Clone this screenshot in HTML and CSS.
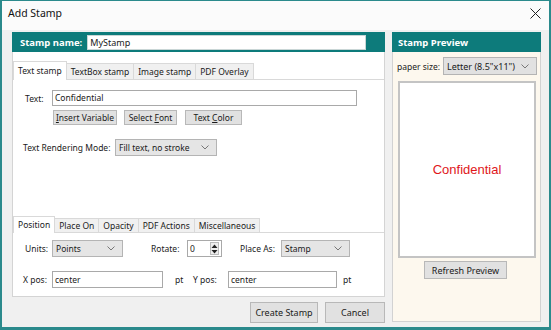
FILE: index.html
```html
<!DOCTYPE html>
<html>
<head>
<meta charset="utf-8">
<link rel="stylesheet" href="styles.css">
</head>
<body>
<div class="window">
  <div class="titlebar">
    <span class="title">Add Stamp</span>
    <svg class="close" width="11" height="11" viewBox="0 0 11 11"><path d="M0.5 0.5L10.5 10.5M10.5 0.5L0.5 10.5" stroke="#222" stroke-width="1" fill="none"/></svg>
  </div>
  <div class="body">
    <div class="left">
      <div class="header">
        <span class="hlabel">Stamp name:</span>
        <div class="namefield">MyStamp</div>
      </div>
      <div class="panel">
        <div class="tabs upper">
          <div class="tab active">Text stamp</div>
          <div class="tab">TextBox stamp</div>
          <div class="tab">Image stamp</div>
          <div class="tab">PDF Overlay</div>
        </div>
        <div class="page upper-page">
          <div class="row text-row">
            <span class="lbl l-text">Text:</span>
            <div class="field text-field">Confidential</div>
          </div>
          <div class="row btn-row">
            <div class="btn b-var"><span><u>I</u>nsert Variable</span></div>
            <div class="btn b-font"><span>Select <u>F</u>ont</span></div>
            <div class="btn b-color"><span>Text <u>C</u>olor</span></div>
          </div>
          <div class="row mode-row">
            <span class="lbl l-mode">Text Rendering Mode:</span>
            <div class="select mode-select"><span>Fill text, no stroke</span><svg width="8" height="5" viewBox="0 0 8 5"><path d="M0.5 0.5L4 4L7.5 0.5" stroke="#777" fill="none"/></svg></div>
          </div>
        </div>
        <div class="tabs lower">
          <div class="tab active">Position</div>
          <div class="tab">Place On</div>
          <div class="tab">Opacity</div>
          <div class="tab">PDF Actions</div>
          <div class="tab">Miscellaneous</div>
        </div>
        <div class="page lower-page">
          <div class="row pos-row1">
            <span class="lbl l-units">Units:</span>
            <div class="select units-select"><span>Points</span><svg width="8" height="5" viewBox="0 0 8 5"><path d="M0.5 0.5L4 4L7.5 0.5" stroke="#777" fill="none"/></svg></div>
            <span class="lbl l-rotate">Rotate:</span>
            <div class="field spin"><span>0</span>
              <div class="spinbtn"><svg width="7" height="10" viewBox="0 0 7 10"><path d="M3.5 0.5L6.5 4H0.5Z M0.5 6H6.5L3.5 9.5Z" fill="#222"/></svg></div>
            </div>
            <span class="lbl l-place">Place As:</span>
            <div class="select place-select"><span>Stamp</span><svg width="8" height="5" viewBox="0 0 8 5"><path d="M0.5 0.5L4 4L7.5 0.5" stroke="#777" fill="none"/></svg></div>
          </div>
          <div class="row pos-row2">
            <span class="lbl l-xpos">X pos:</span>
            <div class="field xfield">center</div>
            <span class="lbl l-pt1">pt</span>
            <span class="lbl l-ypos">Y pos:</span>
            <div class="field yfield">center</div>
            <span class="lbl l-pt2">pt</span>
          </div>
        </div>
      </div>
      <div class="footer">
        <div class="btn b-create">Create Stamp</div>
        <div class="btn b-cancel">Cancel</div>
      </div>
    </div>
    <div class="right">
      <div class="header rheader"><span class="hlabel">Stamp Preview</span></div>
      <div class="paper-row">
        <span class="lbl l-paper">paper size:</span>
        <div class="select paper-select"><span>Letter (8.5"x11")</span><svg width="8" height="5" viewBox="0 0 8 5"><path d="M0.5 0.5L4 4L7.5 0.5" stroke="#777" fill="none"/></svg></div>
      </div>
      <div class="preview"><span class="conf">Confidential</span></div>
      <div class="btn b-refresh">Refresh Preview</div>
    </div>
  </div>
</div>
</body>
</html>
```

FILE: styles.css
```css
* { box-sizing: border-box; }
html, body { margin: 0; padding: 0; }
body {
  width: 551px;
  height: 330px;
  overflow: hidden;
  font-family: "Noto Sans", "Open Sans", sans-serif;
  font-size: 8.5px;
  color: #1a1a1a;
  background: #f0f0f0;
}
.window {
  width: 551px;
  height: 330px;
  border-style: solid;
  border-color: #2b8a8c;
  border-width: 1px 2px 3px 2px;
  background: #f0f0f0;
}
.titlebar {
  height: 29px;
  background: #fbfbfb;
  display: flex;
  align-items: center;
  justify-content: space-between;
  padding: 0 8px 6px 6px;
}
.title { font-size: 10.5px; color: #111; }
.close { margin-top: 2px; }
.body {
  display: flex;
  gap: 7px;
  padding: 2px 0 0 10px;
}
.left {
  width: 373px;
  display: flex;
  flex-direction: column;
}
.header {
  height: 20px;
  background: #0d7b7b;
  display: flex;
  align-items: center;
  padding-left: 8px;
}
.hlabel {
  color: #fff;
  font-weight: bold;
  font-size: 9.5px;
}
.namefield {
  margin-left: 5px;
  width: 279px;
  height: 15px;
  background: #fff;
  border: 1px solid #c9d6d6;
  padding-left: 2px;
  line-height: 13px;
  font-size: 9px;
}
.panel {
  height: 245px;
  background: #fff;
  border: 1px solid #d4d4d4;
  border-top: none;
  padding-top: 10px;
}
.tabs {
  display: flex;
  align-items: flex-end;
  height: 18px;
  border-bottom: 1px solid #d9d9d9;
}
.tab {
  height: 16px;
  line-height: 16px;
  padding: 0 4px;
  border: 1px solid #d9d9d9;
  border-bottom: none;
  background: #f0f0f0;
  margin-right: -1px;
  white-space: nowrap;
}
.tab.active {
  height: 19px;
  margin-bottom: -1px;
  background: #fff;
  line-height: 18px;
}
.tabs.lower {
  height: 16px;
  margin-top: 5px;
}
.tabs.lower .tab { height: 14px; line-height: 14px; }
.tabs.lower .tab.active { height: 17px; line-height: 16px; }
.page { display: flow-root; }
.upper-page { height: 132px; }
.lower-page { height: 59px; }
.row {
  display: flex;
  align-items: center;
  white-space: nowrap;
}
.lbl { flex: none; }
.field {
  height: 16px;
  background: #fff;
  border: 1px solid #a9a9a9;
  padding-left: 2px;
  line-height: 14px;
}
.select {
  height: 17px;
  background: #e5e5e5;
  border: 1px solid #b4b4b4;
  display: flex;
  align-items: center;
  justify-content: space-between;
  padding: 0 7px 0 3px;
}
.btn {
  height: 15px;
  background: #e1e1e1;
  border: 1px solid #b8b8b8;
  display: flex;
  align-items: center;
  justify-content: center;
  white-space: nowrap;
}
.text-row { margin-top: 10px; padding-left: 12px; }
.l-text { width: 27px; }
.text-field { width: 305px; }
.btn-row { margin-top: 4px; padding-left: 40px; }
.b-var { width: 64px; }
.b-font { width: 53px; margin-left: 7px; }
.b-color { width: 57px; margin-left: 8px; }
.mode-row { margin-top: 14px; padding-left: 10px; }
.l-mode { width: 92px; }
.mode-select { width: 102px; }
.pos-row1 { margin-top: 7px; padding-left: 12px; }
.l-units { width: 27px; }
.units-select { width: 71px; }
.l-rotate { margin-left: 28px; width: 36px; }
.spin {
  width: 35px;
  height: 17px;
  display: flex;
  align-items: center;
  justify-content: space-between;
  padding-right: 2px;
}
.spinbtn {
  width: 9px;
  height: 13px;
  border: 1px solid #bbb;
  background: #eee;
  display: flex;
  align-items: center;
  justify-content: center;
}
.l-place { margin-left: 18px; width: 41px; }
.place-select { width: 69px; }
.pos-row2 { margin-top: 14px; padding-left: 10px; }
.l-xpos { width: 29px; }
.xfield { width: 111px; height: 17px; line-height: 15px; }
.l-pt1 { margin-left: 12px; width: 18px; }
.l-ypos { width: 35px; }
.yfield { width: 109px; height: 17px; line-height: 15px; }
.l-pt2 { margin-left: 6px; }
.footer {
  display: flex;
  justify-content: flex-end;
  gap: 7px;
  margin-top: 5px;
}
.footer .btn { height: 21px; font-size: 9px; }
.b-create { width: 68px; }
.b-cancel { width: 60px; }
.right {
  width: 149px;
  height: 290px;
  background: #fdf8ee;
  border: 1px solid #d2d2d2;
  border-top: none;
  display: flex;
  flex-direction: column;
}
.rheader { padding-left: 6px; margin: 0 -1px; }
.paper-row {
  display: flex;
  align-items: center;
  margin-top: 5px;
  padding-left: 4px;
  white-space: nowrap;
}
.l-paper { width: 46px; }
.paper-select { width: 94px; height: 18px; background: #e1e1e1; font-size: 9px; }
.preview {
  margin: 6px 0 0 5px;
  width: 138px;
  height: 177px;
  background: #fff;
  border: 2px solid #c4c4c4;
  display: flex;
  align-items: center;
  justify-content: center;
}
.conf {
  font-family: "Liberation Sans", Arial, sans-serif;
  font-size: 13px;
  color: #e0161b;
}
.b-refresh {
  margin: 3px 0 0 31px;
  width: 83px;
  height: 18px;
  font-size: 9px;
}
```
